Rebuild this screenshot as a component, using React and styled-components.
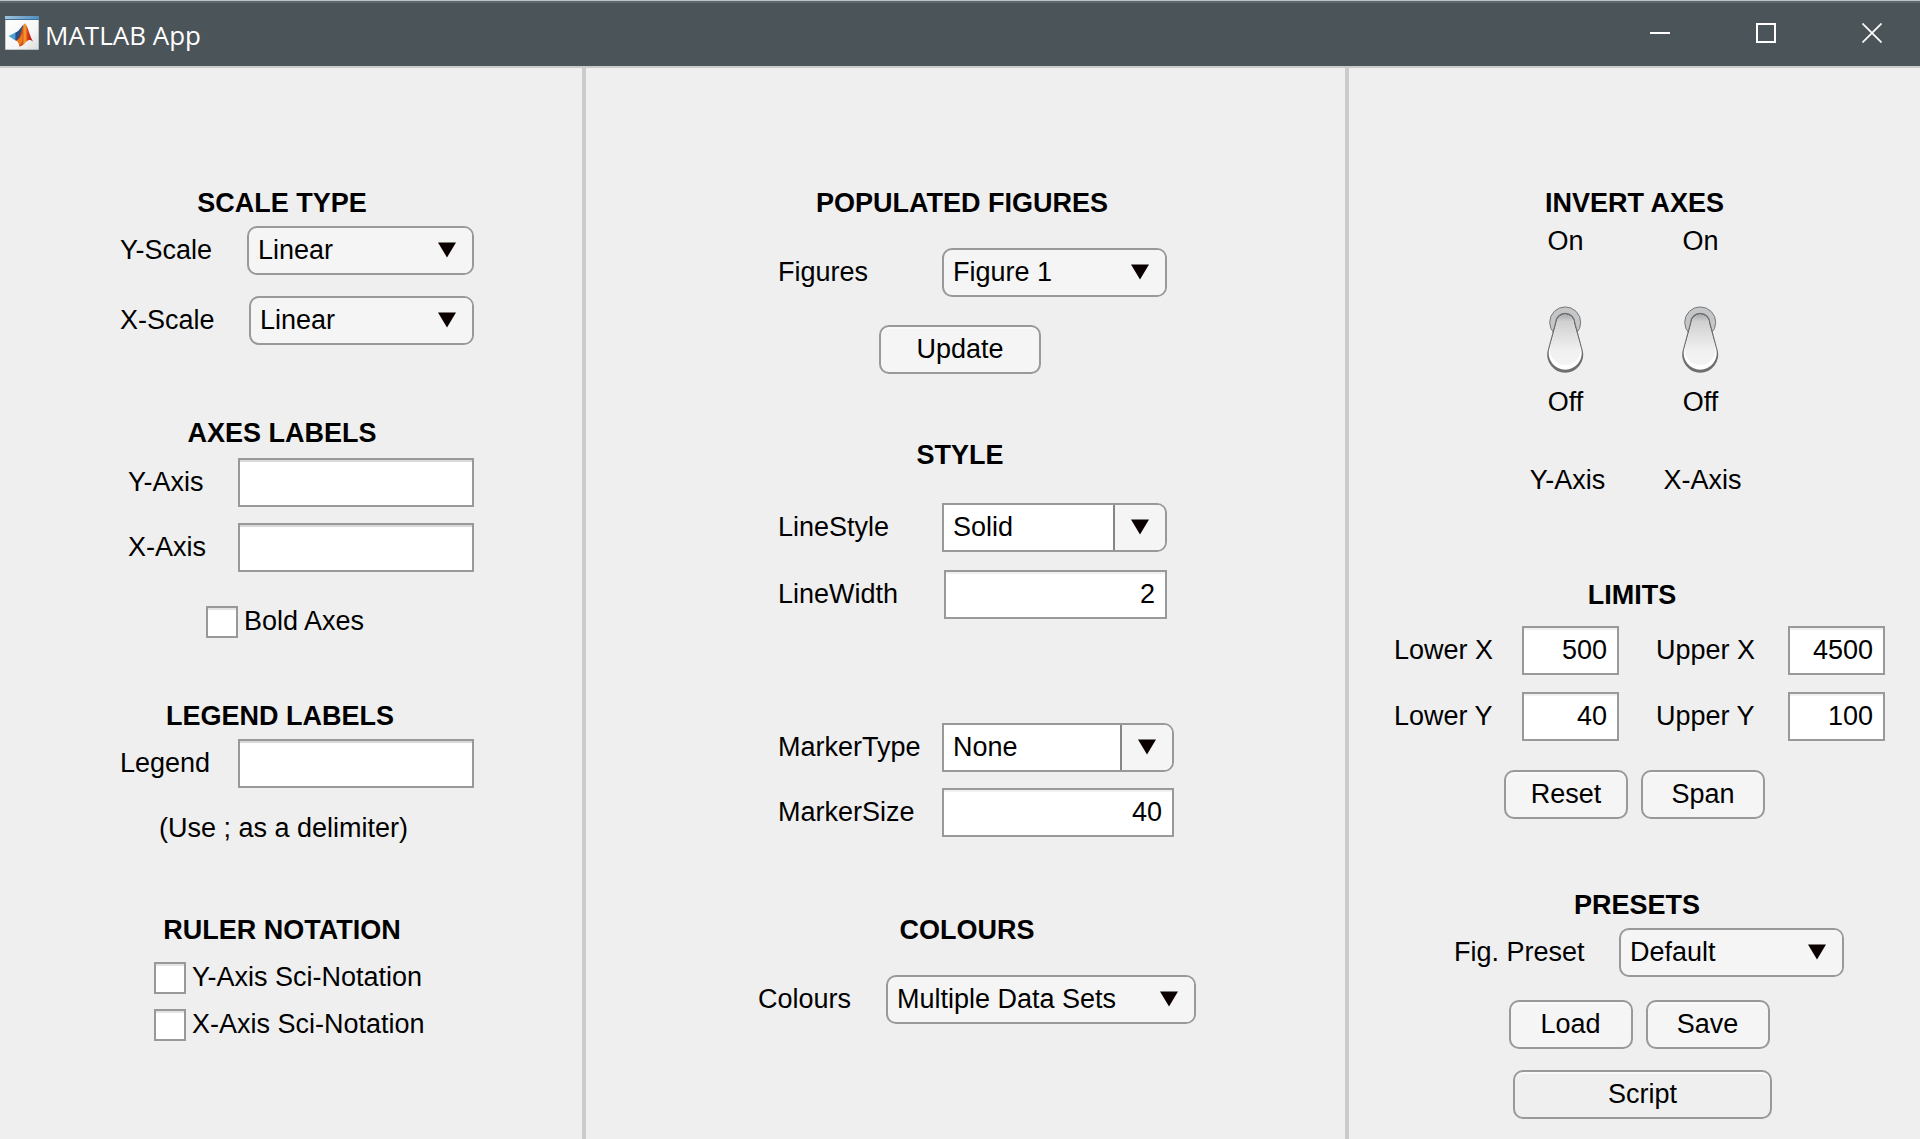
import React, { useId, useState } from "react";
import styled, { createGlobalStyle, css } from "styled-components";

const GlobalStyle = createGlobalStyle`
  *, *::before, *::after { box-sizing: border-box; }
  body {
    margin: 0;
    background: #efefef;
    color: #000;
    font: 27px/32px "Liberation Sans", Arial, sans-serif;
  }
  button, input, select { font: inherit; color: inherit; margin: 0; }
`;

const Window = styled.div`
  display: flex;
  flex-direction: column;
  min-height: 100vh;
`;

/* ---------- title bar ---------- */

const TitleBar = styled.header`
  display: flex;
  justify-content: space-between;
  height: 68px;
  border-top: 1px solid #bfc1c2;
  border-bottom: 2px solid #cbcbcb;
  background: #4b5459;
  box-shadow: inset 0 2px 0 #5c686f;
  color: #fff;
`;

const Brand = styled.div`
  display: flex;
  align-items: center;
  gap: 6px;
  padding: 0 0 1px 5px;
`;

const AppName = styled.h1`
  margin: 0;
  padding-top: 4px;
  font: 400 26px/32px "Open Sans", "Segoe UI", sans-serif;
`;

const WindowControls = styled.div`
  display: flex;
  gap: 10px;
`;

const WindowButton = styled.button`
  display: flex;
  align-items: center;
  justify-content: center;
  width: 96px;
  padding: 0 0 1px;
  border: 0;
  background: none;
`;

/* ---------- layout ---------- */

const Columns = styled.main`
  flex: 1;
  display: grid;
  grid-template-columns: 586fr 763fr 571fr;
`;

const Column = styled.div`
  display: flex;
  justify-content: center;
  padding: 118px 0 20px ${(p) => p.$lead}px;
  &:not(:last-child) { border-right: 4px solid #cbcbcb; }
`;

const Form = styled.form`
  width: ${(p) => p.$width}px;
`;

const Section = styled.section`
  margin-top: ${(p) => p.$top || 0}px;
`;

const Heading = styled.h2`
  margin: 0;
  padding-right: ${(p) => p.$inset}px;
  font-size: 27px;
  line-height: 34px;
  font-weight: 700;
  text-align: center;
`;

const Row = styled.div`
  display: flex;
  align-items: center;
  margin-top: ${(p) => p.$top}px;
  padding-left: ${(p) => p.$indent || 0}px;
`;

const Centered = styled.div`
  display: flex;
  justify-content: center;
  gap: 13px;
  margin-top: ${(p) => p.$top}px;
  padding: 0 ${(p) => p.$inset || 0}px 0 ${(p) => p.$lead || 0}px;
`;

const Label = styled.label`
  flex: ${(p) => (p.$width ? `0 0 ${p.$width}px` : "1")};
  padding-bottom: 2px;
  white-space: nowrap;
`;

const LimitGrid = styled.div`
  display: grid;
  grid-template-columns: 128px 134px 132px 97px;
  row-gap: 17px;
  align-items: center;
  margin-top: 14px;
  padding-left: 1px;
`;

/* ---------- controls ---------- */

const Button = styled.button`
  width: ${(p) => p.$width}px;
  height: 49px;
  padding: 0 0 2px;
  border: 2px solid #999;
  border-radius: 10px;
  background: ${(p) => (p.$flat ? "#efefef" : "#f5f5f5")};
  box-shadow: inset 0 2px 0 #f9f9f9;
`;

const inset = css`
  border: 2px solid #999;
  border-radius: 0;
  background: #fff;
`;

const TextInput = styled.input`
  ${inset}
  width: ${(p) => p.$width}px;
  height: 49px;
  padding: 0 10px 1px;
  box-shadow: inset 0 2px 0 #d9d9d9;
`;

const NumberInput = styled(TextInput)`
  text-align: right;
  box-shadow: inset 0 2px 0 #f1f1f1;
`;

const CheckLabel = styled.label`
  display: flex;
  align-items: center;
  gap: 6px;
  height: 32px;
  span { padding-bottom: 3px; }
`;

const CheckInput = styled.input`
  ${inset}
  appearance: none;
  width: 32px;
  height: 32px;
  box-shadow: inset 0 2px 0 #e4e4e4;
  &:checked { background: #555; }
`;

const SelectFrame = styled.div`
  position: relative;
  width: ${(p) => p.$width}px;
  height: 49px;
`;

const NativeSelect = styled.select`
  appearance: none;
  display: block;
  width: 100%;
  height: 100%;
  padding: 0 52px 2px 9px;
  border: 2px solid #999;
  border-radius: ${(p) => (p.$editable ? "0 10px 10px 0" : "10px")};
  background: ${(p) => (p.$editable ? "#fff" : "#f5f5f5")};
`;

const ArrowPanel = styled.span`
  position: absolute;
  top: 2px;
  right: 2px;
  bottom: 2px;
  display: flex;
  align-items: center;
  padding: 0 16px 1px;
  border-left: 2px solid ${(p) => (p.$editable ? "#868686" : "transparent")};
  border-radius: 0 8px 8px 0;
  background: #f5f5f5;
  pointer-events: none;
`;

const SwitchField = styled.div`
  display: flex;
  flex-direction: column;
  align-items: center;
  width: 135px;
`;

const SwitchToggle = styled.span`
  position: relative;
  width: 37px;
  height: 67px;
  margin: 49px 0 13px;
  input {
    position: absolute;
    inset: 0;
    width: 100%;
    height: 100%;
    opacity: 0;
  }
  svg { display: block; }
  input:checked + svg { transform: rotate(180deg); }
`;

const SwitchName = styled.label`
  margin-top: 46px;
  padding-left: 4px;
`;

/* ---------- drawings ---------- */

const Logo = () => (
  <svg width="34" height="34" viewBox="0 0 34 34" aria-hidden="true">
    <defs>
      <linearGradient id="logoPage" x1="0" y1="0" x2="1" y2="1">
        <stop offset="0" stopColor="#fff" />
        <stop offset="0.6" stopColor="#f6f6f6" />
        <stop offset="1" stopColor="#dcdcdc" />
      </linearGradient>
      <linearGradient id="logoBar" x1="0" y1="0" x2="1" y2="0">
        <stop offset="0" stopColor="#9fc3dc" />
        <stop offset="1" stopColor="#4f8fc0" />
      </linearGradient>
      <linearGradient id="logoPeak" x1="0" y1="0" x2="1" y2="0">
        <stop offset="0" stopColor="#8c1c12" />
        <stop offset="0.3" stopColor="#c93a16" />
        <stop offset="0.52" stopColor="#f7a52b" />
        <stop offset="0.68" stopColor="#d8331a" />
        <stop offset="1" stopColor="#a31414" />
      </linearGradient>
    </defs>
    <rect width="34" height="34" fill="#8d979d" />
    <rect x="0.5" y="4" width="33" height="29.5" fill="url(#logoPage)" />
    <rect x="0" y="0" width="34" height="4" fill="url(#logoBar)" />
    <rect x="0" y="3" width="34" height="1" fill="#3f6f98" />
    <path d="M3.6 20 L10.5 16.4 L14.5 18.5 L10.5 24.4 L7.6 22.8Z" fill="#4f9fd4" />
    <path d="M10.5 16.4 C13.5 16 16 11.5 18.5 8.3 L16.5 20 L12 25 L10.3 24.2Z" fill="#24508c" />
    <path d="M11 24.6 C15 23 16.5 11 19.8 7.2 C22.6 8.5 24.5 20.5 28.4 26 C25.5 23.4 23.5 23.6 21.5 25.6 C19.5 27.7 17.5 30.4 14.4 30.4 C14.2 27.5 13.2 25.4 11 24.6Z" fill="url(#logoPeak)" />
    <path d="M14.4 30.4 C14.2 27.5 13.2 25.4 11 24.6 C14 23.6 15.5 21 17 17.5 C18.2 21 17.6 27 14.4 30.4Z" fill="#ee7a1e" />
  </svg>
);

const Arrow = () => (
  <svg width="18" height="16" viewBox="0 0 18 16" aria-hidden="true">
    <path d="M0 0.5 H18 L9 15.5Z" fill="#0a0000" />
  </svg>
);

const Lever = () => (
  <svg width="37" height="67" viewBox="0 0 37 67" aria-hidden="true">
    <defs>
      <linearGradient id="leverBody" x1="0" y1="0" x2="0" y2="1">
        <stop offset="0" stopColor="#ababab" />
        <stop offset="0.14" stopColor="#d0d0d0" />
        <stop offset="0.7" stopColor="#f0f0f0" />
        <stop offset="1" stopColor="#f4f4f4" />
      </linearGradient>
    </defs>
    <circle cx="18.2" cy="16.4" r="15.5" fill="#c5c6c7" stroke="#77787a" strokeWidth="1" />
    <path d="M8 17 A10.2 10.2 0 0 1 28.4 17 L35.7 44.5 A18 18 0 1 1 0.7 44.5Z" fill="#6d6e70" />
    <path d="M9.6 17 A8.6 8.6 0 0 1 26.8 17 L34.3 43.6 A16.5 16.5 0 1 1 2.1 43.6Z" fill="#fff" />
    <path d="M9.6 17 A8.6 8.6 0 0 1 26.8 17 L33.5 42 A15.4 15.4 0 1 1 2.9 42Z" fill="url(#leverBody)" />
  </svg>
);

/* ---------- composite controls ---------- */

function SelectRow({ label, labelWidth, top, indent, width, options, editable }) {
  const id = useId();
  return (
    <Row $top={top} $indent={indent}>
      <Label htmlFor={id} $width={labelWidth}>{label}</Label>
      <SelectFrame $width={width}>
        <NativeSelect id={id} $editable={editable} defaultValue={options[0]}>
          {options.map((o) => (
            <option key={o}>{o}</option>
          ))}
        </NativeSelect>
        <ArrowPanel $editable={editable}>
          <Arrow />
        </ArrowPanel>
      </SelectFrame>
    </Row>
  );
}

function InputRow({ label, labelWidth, top, indent, width, value, numeric }) {
  const id = useId();
  const Field = numeric ? NumberInput : TextInput;
  return (
    <Row $top={top} $indent={indent}>
      <Label htmlFor={id} $width={labelWidth}>{label}</Label>
      <Field id={id} type="text" inputMode={numeric ? "numeric" : "text"} $width={width} defaultValue={value} />
    </Row>
  );
}

function Checkbox({ label }) {
  return (
    <CheckLabel>
      <CheckInput type="checkbox" />
      <span>{label}</span>
    </CheckLabel>
  );
}

function Limit({ label, value }) {
  const id = useId();
  return (
    <>
      <Label htmlFor={id}>{label}</Label>
      <NumberInput id={id} type="text" inputMode="numeric" $width={97} defaultValue={value} />
    </>
  );
}

function Switch({ name }) {
  const id = useId();
  const [on, setOn] = useState(false);
  return (
    <SwitchField>
      <span>On</span>
      <SwitchToggle>
        <input id={id} type="checkbox" role="switch" checked={on} onChange={() => setOn(!on)} />
        <Lever />
      </SwitchToggle>
      <span>Off</span>
      <SwitchName htmlFor={id}>{name}</SwitchName>
    </SwitchField>
  );
}

export default function App() {
  return (
    <Window>
      <GlobalStyle />
      <TitleBar>
        <Brand>
          <Logo />
          <AppName>MATLAB App</AppName>
        </Brand>
        <WindowControls>
          <WindowButton type="button" aria-label="Minimize">
            <svg width="20" height="20" aria-hidden="true"><path d="M0 10H20" stroke="#fff" strokeWidth="2" /></svg>
          </WindowButton>
          <WindowButton type="button" aria-label="Maximize">
            <svg width="20" height="20" aria-hidden="true"><rect x="1" y="1" width="18" height="18" fill="none" stroke="#fff" strokeWidth="2" /></svg>
          </WindowButton>
          <WindowButton type="button" aria-label="Close">
            <svg width="20" height="20" aria-hidden="true"><path d="M0.5 0.5L19.5 19.5M19.5 0.5L0.5 19.5" stroke="#fff" strokeWidth="1.7" /></svg>
          </WindowButton>
        </WindowControls>
      </TitleBar>

      <Columns>
        <Column $lead={12}>
          <Form $width={354}>
            <Section>
              <Heading $inset={30}>SCALE TYPE</Heading>
              <SelectRow top={6} label="Y-Scale" width={227} options={["Linear", "Log"]} />
              <SelectRow top={21} label="X-Scale" width={225} options={["Linear", "Log"]} />
            </Section>
            <Section $top={71}>
              <Heading $inset={30}>AXES LABELS</Heading>
              <InputRow top={8} indent={8} label="Y-Axis" width={236} />
              <InputRow top={16} indent={8} label="X-Axis" width={236} />
              <Row $top={34} $indent={86}><Checkbox label="Bold Axes" /></Row>
            </Section>
            <Section $top={61}>
              <Heading $inset={34}>LEGEND LABELS</Heading>
              <InputRow top={6} label="Legend" width={236} />
              <Centered $top={24} $inset={27}>(Use ; as a delimiter)</Centered>
            </Section>
            <Section $top={69}>
              <Heading $inset={30}>RULER NOTATION</Heading>
              <Row $top={15} $indent={34}><Checkbox label="Y-Axis Sci-Notation" /></Row>
              <Row $top={15} $indent={34}><Checkbox label="X-Axis Sci-Notation" /></Row>
            </Section>
          </Form>
        </Column>

        <Column $lead={23}>
          <Form $width={438}>
            <Section>
              <Heading $inset={30}>POPULATED FIGURES</Heading>
              <SelectRow top={28} indent={20} label="Figures" labelWidth={164} width={225} options={["Figure 1"]} />
              <Centered $top={28} $inset={34}>
                <Button type="button" $width={162}>Update</Button>
              </Centered>
            </Section>
            <Section $top={64}>
              <Heading $inset={34}>STYLE</Heading>
              <SelectRow top={31} indent={20} label="LineStyle" labelWidth={164} width={225} editable options={["Solid", "Dashed", "Dotted"]} />
              <InputRow top={18} indent={20} label="LineWidth" labelWidth={166} width={223} numeric value="2" />
              <SelectRow top={104} indent={20} label="MarkerType" labelWidth={164} width={232} editable options={["None", "Circle", "Square"]} />
              <InputRow top={16} indent={20} label="MarkerSize" labelWidth={164} width={232} numeric value="40" />
            </Section>
            <Section $top={76}>
              <Heading $inset={20}>COLOURS</Heading>
              <SelectRow top={28} label="Colours" labelWidth={128} width={310} options={["Multiple Data Sets"]} />
            </Section>
          </Form>
        </Column>

        <Column $lead={9}>
          <Form $width={492}>
            <Section>
              <Heading $inset={9}>INVERT AXES</Heading>
              <Row $top={5} $indent={105}>
                <Switch name="Y-Axis" />
                <Switch name="X-Axis" />
              </Row>
            </Section>
            <Section $top={82}>
              <Heading $inset={14}>LIMITS</Heading>
              <LimitGrid>
                <Limit label="Lower X" value="500" />
                <Limit label="Upper X" value="4500" />
                <Limit label="Lower Y" value="40" />
                <Limit label="Upper Y" value="100" />
              </LimitGrid>
              <Centered $top={29} $inset={9}>
                <Button type="button" $width={124}>Reset</Button>
                <Button type="button" $width={124}>Span</Button>
              </Centered>
            </Section>
            <Section $top={69}>
              <Heading $inset={4}>PRESETS</Heading>
              <SelectRow top={6} indent={61} label="Fig. Preset" labelWidth={165} width={225} options={["Default"]} />
              <Centered $top={23}>
                <Button type="button" $width={124}>Load</Button>
                <Button type="button" $width={124}>Save</Button>
              </Centered>
              <Centered $top={21} $lead={7}>
                <Button type="button" $width={259} $flat>Script</Button>
              </Centered>
            </Section>
          </Form>
        </Column>
      </Columns>
    </Window>
  );
}
